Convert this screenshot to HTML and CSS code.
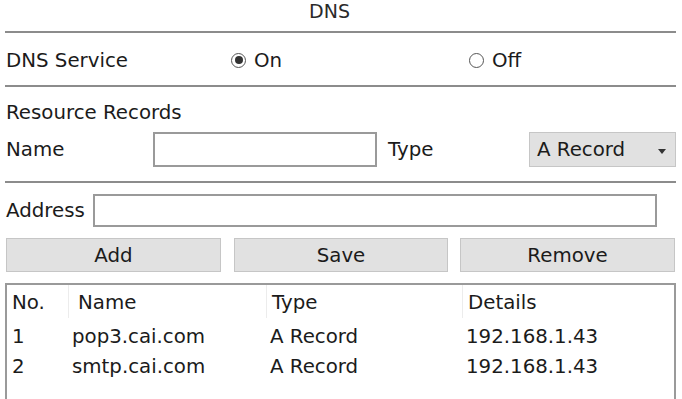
FILE: index.html
```html
<!DOCTYPE html>
<html>
<head>
<meta charset="utf-8">
<link rel="stylesheet" href="styles.css">
</head>
<body>
<div class="page">
  <div class="title">DNS</div>
  <div class="service-row">
    <span class="label service-label">DNS Service</span>
    <span class="radio-opt opt-on"><span class="radio checked"></span>On</span>
    <span class="radio-opt opt-off"><span class="radio"></span>Off</span>
  </div>
  <div class="section-title">Resource Records</div>
  <div class="name-row">
    <span class="label name-label">Name</span>
    <span class="input name-input"></span>
    <span class="label type-label">Type</span>
    <span class="select"><span class="select-text">A Record</span><span class="caret"></span></span>
  </div>
  <div class="address-row">
    <span class="label address-label">Address</span>
    <span class="input address-input"></span>
  </div>
  <div class="buttons">
    <span class="btn btn-add">Add</span>
    <span class="btn btn-save">Save</span>
    <span class="btn btn-remove">Remove</span>
  </div>
  <div class="table">
    <div class="trow thead">
      <span class="c1">No.</span><span class="c2">Name</span><span class="c3">Type</span><span class="c4">Details</span>
    </div>
    <div class="trow">
      <span class="c1">1</span><span class="c2">pop3.cai.com</span><span class="c3">A Record</span><span class="c4">192.168.1.43</span>
    </div>
    <div class="trow">
      <span class="c1">2</span><span class="c2">smtp.cai.com</span><span class="c3">A Record</span><span class="c4">192.168.1.43</span>
    </div>
  </div>
</div>
</body>
</html>
```
FILE: styles.css
```css
* { box-sizing: border-box; }
html, body { margin: 0; padding: 0; background: #fff; overflow: hidden; }
body {
  font-family: "DejaVu Sans", Verdana, sans-serif;
  font-size: 19.8px;
  color: #1b1b1b;
}
.page { padding: 0 6px 0 5px; width: 682px; height: 399px; overflow: hidden; }
.title {
  height: 33px;
  border-bottom: 2px solid #8c8c8c;
  text-align: center;
  font-size: 19px;
  line-height: 23px;
  padding-right: 22px;
  color: #2a2a2a;
}
.service-row {
  height: 54px;
  display: flex;
  align-items: center;
  border-bottom: 2px solid #8c8c8c;
  padding-left: 1px;
  padding-top: 2px;
}
.service-label { width: 225px; }
.radio-opt { display: flex; align-items: center; gap: 8px; }
.opt-on { width: 238px; }
.radio {
  width: 15px; height: 15px;
  border: 1.5px solid #555;
  border-radius: 50%;
  display: inline-flex;
  align-items: center;
  justify-content: center;
}
.radio.checked::after {
  content: "";
  width: 8px; height: 8px;
  border-radius: 50%;
  background: #333;
}
.section-title {
  height: 37px;
  padding-top: 14px;
  line-height: 24px;
  padding-left: 1px;
}
.name-row {
  display: flex;
  align-items: center;
  height: 35px;
  margin-top: 8px;
  padding-left: 1px;
}
.name-label { width: 147px; }
.input {
  display: block;
  background: #fff;
  border: 2px solid #9a9a9a;
}
.name-input { width: 224px; height: 35px; }
.type-label { margin-left: 11px; width: 141px; }
.select {
  display: flex;
  align-items: center;
  justify-content: space-between;
  width: 147px;
  height: 35px;
  background: #e1e1e1;
  border: 1px solid #c6c6c6;
  padding: 0 9px 0 7px;
}
.caret {
  width: 0; height: 0;
  border-left: 4px solid transparent;
  border-right: 4px solid transparent;
  border-top: 5px solid #333;
  margin-top: 3px;
}
.address-row {
  margin-top: 14px;
  border-top: 2px solid #8c8c8c;
  padding-top: 11px;
  display: flex;
  align-items: center;
  padding-left: 1px;
}
.address-label { width: 87px; }
.address-input { width: 564px; height: 33px; }
.buttons {
  display: flex;
  margin-top: 11px;
  padding-left: 1px;
}
.btn {
  height: 34px;
  background: #e1e1e1;
  border: 1px solid #c6c6c6;
  display: flex;
  align-items: center;
  justify-content: center;
}
.btn-add { width: 215px; }
.btn-save { width: 214px; margin-left: 13px; }
.btn-remove { width: 215px; margin-left: 12px; }
.table {
  margin-top: 11px;
  width: 671px;
  height: 140px;
  border: 2px solid #9a9a9a;
  border-bottom: none;
}
.trow { display: flex; height: 30px; align-items: center; }
.thead { height: 33px; margin-bottom: 3px; }
.thead span { border-right: 1px solid #ececec; height: 33px; display: flex; align-items: center; padding-top: 2px; }
.c1 { width: 62px; padding-left: 5px; }
.c2 { width: 198px; padding-left: 3px; }
.c3 { width: 196px; padding-left: 3px; }
.c4 { flex: 1; padding-left: 3px; }
.thead .c1 { padding-left: 5px; }
.thead .c2 { padding-left: 9px; }
.thead .c3 { padding-left: 5px; }
.thead .c4 { padding-left: 5px; border-right: none; }
```
